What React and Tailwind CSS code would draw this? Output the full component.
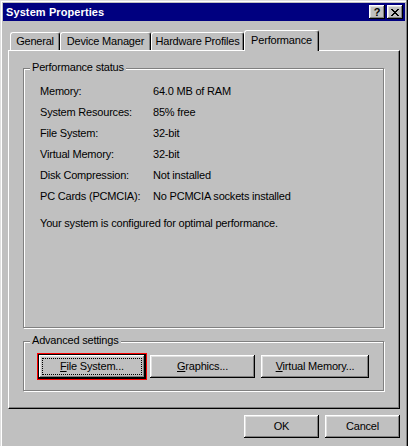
import React from 'react'

const RAISED = 'shadow-[inset_-1px_-1px_0_#000,inset_1px_1px_0_#fff,inset_-2px_-2px_0_#808080,inset_2px_2px_0_#dfdfdf]'
const ETCHED = 'border border-[#808080] shadow-[inset_1px_1px_0_#fff,1px_1px_0_#fff]'

const STATUS = [
  { label: 'Memory:',             value: '64.0 MB of RAM' },
  { label: 'System Resources:',   value: '85% free' },
  { label: 'File System:',        value: '32-bit' },
  { label: 'Virtual Memory:',     value: '32-bit' },
  { label: 'Disk Compression:',   value: 'Not installed' },
  { label: 'PC Cards (PCMCIA):',  value: 'No PCMCIA sockets installed' },
]

const TABS = [
  { label: 'General',           w: 'w-[50px]' },
  { label: 'Device Manager',    w: 'w-[91px]' },
  { label: 'Hardware Profiles', w: 'w-[93px]' },
]

function Button({ children, className = '' }) {
  return (
    <button className={`h-[23px] bg-[#c0c0c0] text-black flex items-center justify-center ${RAISED} ${className}`}>
      {children}
    </button>
  )
}

function GroupBox({ title, className = '', children }) {
  return (
    <div className={`relative ${ETCHED} ${className}`}>
      <span className="absolute left-[6px] -top-[8px] px-[2px] bg-[#c0c0c0] leading-[13px]">{title}</span>
      {children}
    </div>
  )
}

export default function App() {
  return (
    <div className="w-[408px] h-[446px] bg-[#c0c0c0] pt-[3px] pl-[3px] pr-[3px] text-[11px] text-black font-['Liberation_Sans',Arial,sans-serif] tracking-[-0.2px] shadow-[inset_-1px_0_0_#000,inset_-2px_0_0_#808080,inset_1px_1px_0_#dfdfdf,inset_2px_2px_0_#fff] overflow-hidden">
      {/* Title bar */}
      <div className="h-[18px] bg-[#000080] flex items-center justify-between pl-[3px] pr-[2px]">
        <span className="text-white font-bold text-[11px] tracking-[0.1px] leading-none">System Properties</span>
        <div className="flex gap-[2px]">
          <div className={`w-[16px] h-[14px] bg-[#c0c0c0] flex items-center justify-center font-bold text-[11px] leading-none ${RAISED}`}>?</div>
          <div className={`w-[16px] h-[14px] bg-[#c0c0c0] flex items-center justify-center ${RAISED}`}>
            <svg width="8" height="7" viewBox="0 0 8 7" shapeRendering="crispEdges">
              <path d="M0 0h2v1h-2zM6 0h2v1h-2zM1 1h2v1h-2zM5 1h2v1h-2zM2 2h4v1h-4zM3 3h2v1h-2zM2 4h4v1h-4zM1 5h2v1h-2zM5 5h2v1h-2zM0 6h2v1h-2zM6 6h2v1h-2z" fill="#000" />
            </svg>
          </div>
        </div>
      </div>

      <div className="pl-[5px]">
        {/* Tabs */}
        <div className="mt-[9px] h-[20px] flex items-end pl-[2px]">
          {TABS.map(t => (
            <div
              key={t.label}
              className={`${t.w} h-[18px] flex items-center justify-center border-l border-t border-white border-r border-r-black rounded-t-[3px] shadow-[inset_-1px_0_0_#808080]`}
            >
              {t.label}
            </div>
          ))}
          <div className="relative z-10 w-[75px] h-[21px] -mb-px bg-[#c0c0c0] flex items-center justify-center pb-[2px] border-l border-t border-white border-r border-r-black rounded-t-[3px] shadow-[inset_-1px_0_0_#808080]">
            Performance
          </div>
        </div>

        {/* Tab panel */}
        <div className="w-[392px] h-[359px] border-l border-t border-white border-r border-b border-r-black border-b-black shadow-[inset_-1px_-1px_0_#808080] pl-[14px] pt-[17px]">
          <GroupBox title="Performance status" className="w-[361px] h-[260px] pt-[12px] pl-[16px]">
            {STATUS.map(s => (
              <div key={s.label} className="h-[21px] flex items-center">
                <span className="w-[113px]">{s.label}</span>
                <span>{s.value}</span>
              </div>
            ))}
            <div className="h-[21px] mt-[6px] flex items-center">Your system is configured for optimal performance.</div>
          </GroupBox>

          <GroupBox title="Advanced settings" className="w-[361px] h-[50px] mt-[13px] pt-[11px] pl-[13px]">
            <div className="flex items-center">
              <div className="w-[110px] h-[27px] border border-[#ff0000]">
                <div className="h-[25px] border border-black">
                  <Button className="relative w-full">
                    <span className="absolute inset-[3px] border border-dotted border-black" />
                    <span><span className="underline">F</span>ile System...</span>
                  </Button>
                </div>
              </div>
              <Button className="w-[105px] ml-[3px]"><span><span className="underline">G</span>raphics...</span></Button>
              <Button className="w-[108px] ml-[6px]"><span><span className="underline">V</span>irtual Memory...</span></Button>
            </div>
          </GroupBox>
        </div>

        {/* Dialog buttons */}
        <div className="flex justify-end gap-[6px] mt-[6px] pr-[5px]">
          <Button className="w-[75px]">OK</Button>
          <Button className="w-[75px]">Cancel</Button>
        </div>
      </div>
    </div>
  )
}
